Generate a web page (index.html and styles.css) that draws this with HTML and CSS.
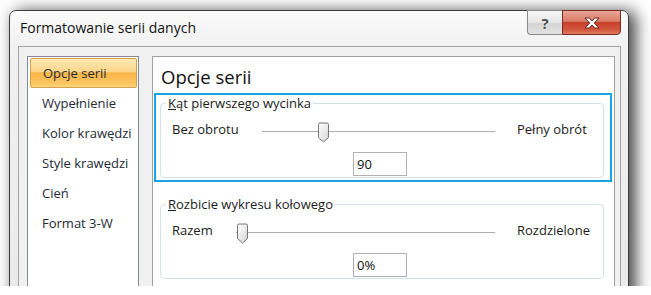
FILE: index.html
```html
<!DOCTYPE html>
<html lang="pl">
<head>
    <meta charset="UTF-8">
    <title>Formatowanie serii danych</title>
    <link rel="stylesheet" href="styles.css">
</head>
<body>
    <div class="shot">
        <div class="window">
            <!-- pasek tytułu -->
            <div class="titlebar">
                <span class="title">Formatowanie serii danych</span>
                <div class="caption-buttons">
                    <button class="cap-btn help">?</button>
                    <button class="cap-btn close">
                        <svg width="16" height="12" viewBox="0 0 16 12">
                            <path d="M1 1H5.2L8 4L10.8 1H15L10.3 6L15 11H10.8L8 8L5.2 11H1L5.7 6Z" fill="#fff" stroke="#5e2a22" stroke-width="1" stroke-linejoin="round"/>
                        </svg>
                    </button>
                </div>
            </div>

            <div class="client">
                <ul class="nav">
                    <li class="active">Opcje serii</li>
                    <li>Wypełnienie</li>
                    <li>Kolor krawędzi</li>
                    <li>Style krawędzi</li>
                    <li>Cień</li>
                    <li>Format 3-W</li>
                </ul>

                <div class="panel">
                    <h2>Opcje serii</h2>

                    <div class="highlight">
                        <fieldset class="group">
                            <legend><u>K</u>ąt pierwszego wycinka</legend>
                            <div class="slider-row">
                                <span class="lbl">Bez obrotu</span>
                                <div class="slider">
                                    <svg class="thumb" style="margin-left: calc(25% - 3px)" width="13" height="22" viewBox="0 0 13 22">
                                        <defs>
                                            <linearGradient id="tg1" x1="0" y1="0" x2="1" y2="1">
                                                <stop offset="0" stop-color="#ffffff"/>
                                                <stop offset="0.5" stop-color="#ececec"/>
                                                <stop offset="1" stop-color="#cfcfcf"/>
                                            </linearGradient>
                                        </defs>
                                        <path d="M1.5 3.5Q1.5 2 3 2H10Q11.5 2 11.5 3.5V16.5L6.5 21L1.5 16.5Z" fill="url(#tg1)" stroke="#767676"/>
                                    </svg>
                                </div>
                                <span class="lbl-end">Pełny obrót</span>
                            </div>
                            <div class="value-row">
                                <input class="num" type="text" value="90">
                            </div>
                        </fieldset>
                    </div>

                    <fieldset class="group second">
                        <legend><u>R</u>ozbicie wykresu kołowego</legend>
                        <div class="slider-row">
                            <span class="lbl">Razem</span>
                            <div class="slider">
                                <svg class="thumb" style="margin-left: 0" width="13" height="22" viewBox="0 0 13 22">
                                    <defs>
                                        <linearGradient id="tg2" x1="0" y1="0" x2="1" y2="1">
                                            <stop offset="0" stop-color="#ffffff"/>
                                            <stop offset="0.5" stop-color="#ececec"/>
                                            <stop offset="1" stop-color="#cfcfcf"/>
                                        </linearGradient>
                                    </defs>
                                    <path d="M1.5 3.5Q1.5 2 3 2H10Q11.5 2 11.5 3.5V16.5L6.5 21L1.5 16.5Z" fill="url(#tg2)" stroke="#767676"/>
                                </svg>
                            </div>
                            <span class="lbl-end">Rozdzielone</span>
                        </div>
                        <div class="value-row">
                            <input class="num" type="text" value="0%">
                        </div>
                    </fieldset>
                </div>
            </div>
        </div>
    </div>
</body>
</html>
```

FILE: styles.css
```css
/* podstawy */
* {
    box-sizing: border-box;
}

body {
    margin: 0;
    background: #fff;
    font-family: 'Open Sans', 'Noto Sans', sans-serif;
    font-size: 13px;
    color: #1c1c1c;
}

/* kadr zrzutu - dół okna jest ucięty */
.shot {
    height: 286px;
    overflow: hidden;
    padding: 10px 0 0 9px;
}

.window {
    width: 620px;
    height: 320px;
    display: flex;
    flex-direction: column;
    border: 1px solid #3c3c3c;
    border-radius: 7px 7px 0 0;
    background: linear-gradient(#fbfbfb, #f1f1f1 36px, #e9e9e9);
    box-shadow: 6px 2px 16px 1px rgba(0, 0, 0, 0.72);
}

/* pasek tytułu */
.titlebar {
    height: 35px;
    display: flex;
    align-items: flex-start;
    padding: 0 7px 0 10px;
}

.title {
    font-size: 14px;
    line-height: 19px;
    margin-top: 7px;
    color: #111;
}

.caption-buttons {
    margin-left: auto;
    margin-top: -1px;
    display: flex;
}

.cap-btn {
    height: 25px;
    padding: 0;
    margin: 0;
    display: flex;
    align-items: center;
    justify-content: center;
    font-family: 'Open Sans', sans-serif;
}

.help {
    width: 35px;
    border: 1px solid #8a8a8a;
    border-right: none;
    border-radius: 0 0 0 4px;
    background: linear-gradient(#f7f7f7, #e6e6e6 50%, #d4d4d4 51%, #e2e2e2);
    font-size: 15px;
    font-weight: bold;
    color: #4a4a4a;
    text-shadow: 0 0 2px #fff, 0 0 1px #fff;
}

.close {
    width: 59px;
    border: 1px solid #7a2c22;
    border-radius: 0 0 4px 0;
    background: linear-gradient(#e9a697, #da7a66 45%, #c6412c 50%, #d2543c 80%, #e07a5e);
}

/* obszar klienta */
.client {
    flex: 1;
    margin: 0 7px 0 8px;
    display: flex;
    gap: 13px;
    padding: 9px 5px 0 8px;
    border: 1px solid #a3a3a3;
    background: #f0f0f0;
}

/* lista kategorii */
.nav {
    width: 112px;
    margin: 0;
    padding: 1px 1px 0 2px;
    list-style: none;
    background: #fff;
    border: 1px solid #848a92;
}

.nav li {
    height: 30px;
    line-height: 30px;
    padding-left: 12px;
    white-space: nowrap;
    color: #1e2a36;
}

.nav li.active {
    line-height: 28px;
    border: 1px solid #d2a04c;
    border-radius: 2px;
    background: linear-gradient(#fde9b6, #fcd68a 45%, #f9b548 50%, #fac45e 85%, #fcd47a);
}

/* panel opcji */
.panel {
    flex: 1;
    background: #fff;
    border: 1px solid #a0a0a0;
    padding: 0 10px 0 7px;
}

h2 {
    height: 36px;
    margin: 0;
    padding: 8px 0 0 1px;
    font-size: 18.5px;
    font-weight: normal;
    line-height: 24px;
    color: #111;
}

/* niebieska ramka wyróżnienia */
.highlight {
    margin: 0 -8px 0 -6px;
    padding: 0 6px 2px 4px;
    border: 2px solid #16a4e6;
}

.group {
    margin: 0;
    min-width: 0;
    padding: 10px 0 1px 5px;
    border: 1px solid #d5dfe5;
    border-radius: 4px;
}

.group.second {
    margin-top: 14px;
}

.group legend {
    padding: 0 2px;
    line-height: 16px;
}

.slider-row {
    display: flex;
    height: 22px;
    margin: 0 14px 0 6px;
}

.lbl,
.lbl-end {
    line-height: 16px;
    white-space: nowrap;
}

.lbl-end {
    width: 72px;
}

.slider {
    flex: 1;
    margin: 0 22px 0 23px;
    background: linear-gradient(#acacac, #acacac) 0 10px / 100% 1px no-repeat;
}

.thumb {
    display: block;
}

.value-row {
    margin: 9px 0 0 187px;
}

.num {
    display: block;
    width: 54px;
    height: 24px;
    margin: 0;
    padding: 0 3px;
    border: 1px solid #b0b0b0;
    font-family: 'Open Sans', 'Noto Sans', sans-serif;
    font-size: 13px;
    color: #111;
    background: #fff;
}
```
